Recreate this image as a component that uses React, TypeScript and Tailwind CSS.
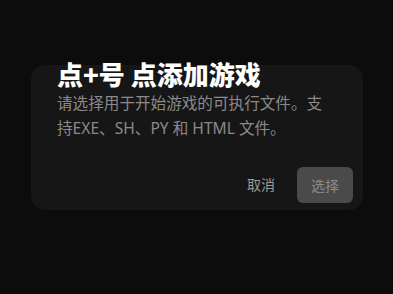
export default function App() {
  return (
    <div
      className="h-[294px] w-full overflow-hidden bg-[#0c0c0c] pt-[65px] pl-[31px]"
      style={{ fontFamily: '"Noto Sans", "Noto Sans CJK SC", sans-serif' }}
    >
      <div className="flex h-[145px] w-[332px] flex-col rounded-[14px] bg-[#161616] pl-[26px] pr-[10px]">
        <h2
          className="-mt-[4px] text-[26px] font-black leading-[26px] text-white"
          style={{ fontFamily: '"Noto Sans CJK SC", sans-serif' }}
        >
          点+号 点添加游戏
        </h2>
        <p className="mt-[4px] w-[274px] text-[15.6px] leading-[25px] text-[#8a8a8a]">
          请选择用于开始游戏的可执行文件。支持EXE、SH、PY 和 HTML 文件。
        </p>
        <div className="mt-[26px] flex items-center justify-end gap-[22px]">
          <button className="text-[14px] leading-[20px] text-[#9a9a9a]">取消</button>
          <button className="h-[36px] w-[56px] rounded-[6px] bg-[#4a4a4a] text-[14px] text-[#8a8a8a]">
            选择
          </button>
        </div>
      </div>
    </div>
  );
}
